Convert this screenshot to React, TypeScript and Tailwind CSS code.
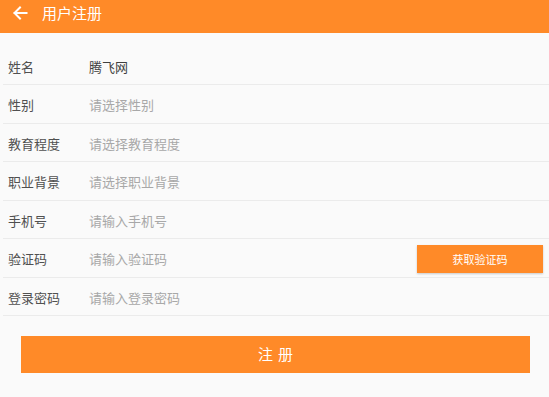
import React from 'react';

const font = { fontFamily: '"Noto Sans CJK SC", "Noto Sans", sans-serif' };

type Row = { label: string; value?: string; placeholder?: string; code?: boolean };

const rows: Row[] = [
  { label: '姓名', value: '腾飞网' },
  { label: '性别', placeholder: '请选择性别' },
  { label: '教育程度', placeholder: '请选择教育程度' },
  { label: '职业背景', placeholder: '请选择职业背景' },
  { label: '手机号', placeholder: '请输入手机号' },
  { label: '验证码', placeholder: '请输入验证码', code: true },
  { label: '登录密码', placeholder: '请输入登录密码' },
];

export default function App() {
  return (
    <div className="w-[549px] h-[397px] bg-[#fafafa] overflow-hidden" style={font}>
      <div className="h-[33px] bg-[#ff8a28] flex items-start pt-[3px] pl-[12px] text-white">
        <svg width="16" height="16" viewBox="0 0 16 16" className="mt-[2px]" fill="none" stroke="white" strokeWidth="2" strokeLinecap="square">
          <path d="M14.5 8H2.5M8 2.5L2.5 8L8 13.5" />
        </svg>
        <span className="ml-[14px] text-[15px] leading-[20px]">用户注册</span>
      </div>

      <div className="mt-[13.5px] pl-[3px]">
        {rows.map((r) => (
          <div key={r.label} className="h-[38.5px] border-b border-[#ebebeb] flex items-center pt-[2px]">
            <span className="w-[86px] pl-[5px] text-[13px] text-[#505050]">{r.label}</span>
            <span className={r.value ? 'text-[13px] text-[#404040]' : 'text-[13px] text-[#a8a8a8]'}>
              {r.value ?? r.placeholder}
            </span>
            {r.code && (
              <button className="ml-auto mr-[6px] w-[126px] h-[28px] bg-[#ff8a28] text-white text-[11px] shadow-[0_1px_2px_rgba(0,0,0,0.2)]">
                获取验证码
              </button>
            )}
          </div>
        ))}
      </div>

      <div className="px-[21px] pr-[19px] mt-[19.5px]">
        <button className="w-full h-[37px] bg-[#ff8a28] text-white text-[15px] tracking-[5px] pl-[5px]">注册</button>
      </div>
    </div>
  );
}
